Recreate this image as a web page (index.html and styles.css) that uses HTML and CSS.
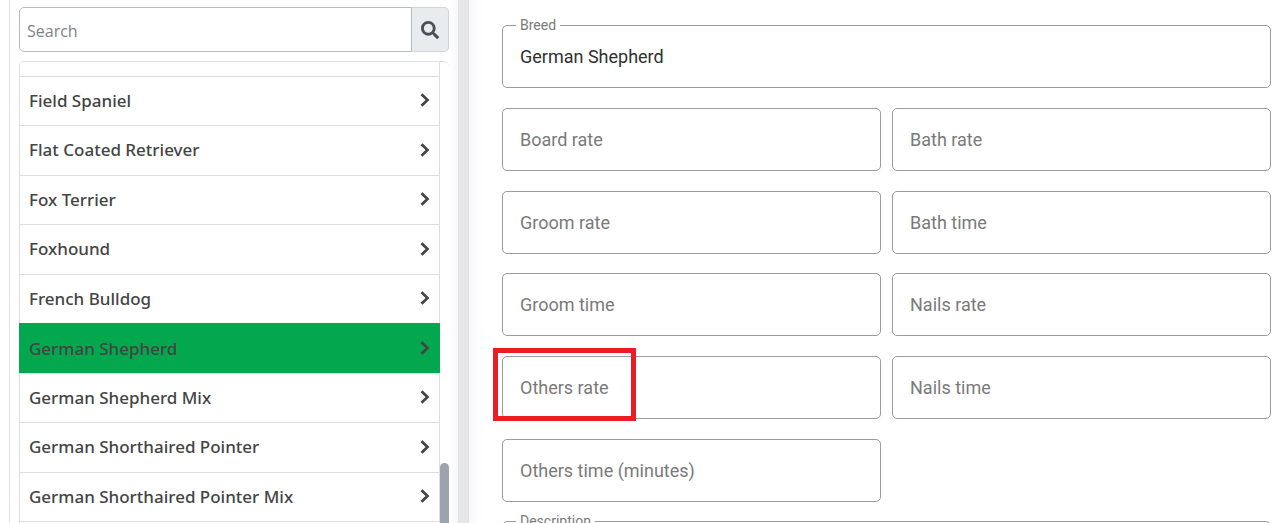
FILE: index.html
```html
<!DOCTYPE html>
<html lang="en">
<head>
<meta charset="utf-8">
<title>Breeds</title>
<link rel="stylesheet" href="styles.css">
</head>
<body>
<svg class="sprite" aria-hidden="true">
  <symbol id="chevron" viewBox="0 0 10 16"><path d="M1.500 2.200L7.500 8L1.500 13.800" fill="none" stroke="currentColor" stroke-width="2.700"/></symbol>
</svg>
<div class="page">
  <aside class="panel sidebar">
    <form class="search" role="search">
      <input class="search-input" type="text" placeholder="Search" aria-label="Search">
      <button class="search-button" type="button" aria-label="Search">
        <svg viewBox="0 0 512 512" width="18" height="18" aria-hidden="true"><path fill="currentColor" d="M505 442.700L405.300 343c-4.500-4.500-10.600-7-17-7H372c27.600-35.300 44-79.700 44-128C416 93.100 322.900 0 208 0S0 93.100 0 208s93.100 208 208 208c48.300 0 92.700-16.400 128-44v16.300c0 6.400 2.500 12.500 7 17l99.700 99.700c9.400 9.400 24.600 9.400 33.900 0l28.300-28.300c9.400-9.400 9.400-24.600.1-34zM208 336c-70.700 0-128-57.200-128-128 0-70.700 57.200-128 128-128 70.700 0 128 57.200 128 128 0 70.700-57.200 128-128 128z"/></svg>
      </button>
    </form>
    <div class="list-box">
      <ul class="list">
        <li class="item"></li>
        <li class="item"><button class="row" type="button">Field Spaniel<svg class="chevron"><use href="#chevron"/></svg></button></li>
        <li class="item"><button class="row" type="button">Flat Coated Retriever<svg class="chevron"><use href="#chevron"/></svg></button></li>
        <li class="item"><button class="row" type="button">Fox Terrier<svg class="chevron"><use href="#chevron"/></svg></button></li>
        <li class="item"><button class="row" type="button">Foxhound<svg class="chevron"><use href="#chevron"/></svg></button></li>
        <li class="item"><button class="row" type="button">French Bulldog<svg class="chevron"><use href="#chevron"/></svg></button></li>
        <li class="item active"><button class="row" type="button" aria-current="true">German Shepherd<svg class="chevron"><use href="#chevron"/></svg></button></li>
        <li class="item"><button class="row" type="button">German Shepherd Mix<svg class="chevron"><use href="#chevron"/></svg></button></li>
        <li class="item"><button class="row" type="button">German Shorthaired Pointer<svg class="chevron"><use href="#chevron"/></svg></button></li>
        <li class="item"><button class="row" type="button">German Shorthaired Pointer Mix<svg class="chevron"><use href="#chevron"/></svg></button></li>
        <li class="item"></li>
      </ul>
      <div class="thumb"></div>
    </div>
  </aside>
  <main class="panel detail">
    <form class="form">
      <div class="field wide floated"><input id="breed" type="text" value="German Shepherd"><label for="breed">Breed</label></div>
      <div class="field"><input id="board-rate" type="text"><label for="board-rate">Board rate</label></div>
      <div class="field"><input id="bath-rate" type="text"><label for="bath-rate">Bath rate</label></div>
      <div class="field"><input id="groom-rate" type="text"><label for="groom-rate">Groom rate</label></div>
      <div class="field"><input id="bath-time" type="text"><label for="bath-time">Bath time</label></div>
      <div class="field"><input id="groom-time" type="text"><label for="groom-time">Groom time</label></div>
      <div class="field"><input id="nails-rate" type="text"><label for="nails-rate">Nails rate</label></div>
      <div class="field marked"><input id="others-rate" type="text"><label for="others-rate">Others rate</label></div>
      <div class="field"><input id="nails-time" type="text"><label for="nails-time">Nails time</label></div>
      <div class="field"><input id="others-time" type="text"><label for="others-time">Others time (minutes)</label></div>
      <div class="field wide floated"><textarea id="description"></textarea><label for="description">Description</label></div>
    </form>
  </main>
</div>
</body>
</html>
```

FILE: styles.css
```css
*, *::after { box-sizing: border-box; }

body {
  margin: 0;
  background: #fff;
  font-family: "Open Sans", "Noto Sans", sans-serif;
  color: #444;
}

.sprite { position: absolute; width: 0; height: 0; }

.page {
  display: grid;
  grid-template-columns: 450px 1fr;
  column-gap: 9px;
  height: 100vh;
  padding-left: 9px;
  overflow: hidden;
  background: linear-gradient(90deg, #fff 9px, #e7e7e7 9px);
}

.panel { min-width: 0; min-height: 0; background: #fff; }

.sidebar {
  display: flex;
  flex-direction: column;
  gap: 9px;
  padding: 7px 9px 0;
  border: solid #dee2e6;
  border-width: 0 1px;
  background: linear-gradient(270deg, #f8f8fa, #fff 10px);
}

.search { display: flex; flex: none; height: 45px; }

.search-input {
  flex: 1;
  min-width: 0;
  padding: 2px 7px 0;
  border: 1px solid #b9bbbd;
  border-radius: 5px 0 0 5px;
  font: 16px "Open Sans", "Noto Sans", sans-serif;
  background: #fff;
}

.search-input::placeholder { color: #7b838a; opacity: 1; }

.search-button {
  display: grid;
  place-items: center;
  width: 37px;
  padding: 0;
  border: 1px solid #ced4da;
  border-left: 0;
  border-radius: 0 5px 5px 0;
  background: #e9ecef;
  color: #495057;
}

.list-box {
  position: relative;
  flex: 1;
  min-height: 0;
  padding-right: 9px;
  overflow: hidden;
  border-top: 1px solid #dedede;
  border-radius: 5px 5px 0 0;
}

.list {
  display: grid;
  grid-template-rows: 15px;
  grid-auto-rows: 49px 50px;
  margin: 0;
  padding: 0;
  border: solid #dedede;
  border-width: 0 1px;
  list-style: none;
}

.item { display: grid; border-bottom: 1px solid #dedede; }

.row {
  display: flex;
  align-items: center;
  justify-content: space-between;
  padding: 0 9px 2px;
  border: 0;
  background: none;
  color: #444;
  font: 500 17px "Noto Sans", "Open Sans", sans-serif;
  text-align: left;
}

.active .row { margin: -1px -1px 0; padding: 0 10px; background: #03a84e; }

.chevron { width: 10px; height: 16px; }

.thumb {
  position: absolute;
  top: 401px;
  right: 0;
  bottom: -10px;
  width: 9px;
  border-radius: 5px;
  background: #9ca3af;
}

.detail {
  padding: 25px 14px 0 33px;
  border-left: 1px solid #dee2e6;
  background: linear-gradient(90deg, #f8f8fa, #fff 14px);
}

.form {
  display: grid;
  grid-template-columns: 1fr 1fr;
  grid-auto-rows: 83px 83px 82px;
  column-gap: 11px;
}

.field { position: relative; height: 63px; }

.wide { grid-column: 1 / -1; }

.field input,
.field textarea {
  display: block;
  width: 100%;
  height: 100%;
  padding: 0 17px;
  border: 1px solid #9c9c9c;
  border-radius: 5px;
  background: #fff;
  color: #303030;
  font: 18px Roboto, sans-serif;
  resize: none;
}

.field label {
  position: absolute;
  top: 0;
  left: 18px;
  color: #7a7a7a;
  font: 18px/63px Roboto, sans-serif;
}

.field.floated label {
  top: -9px;
  left: 14px;
  padding: 0 4px;
  background: #fff;
  font-size: 14px;
  line-height: 18px;
}

.marked::after {
  content: "";
  position: absolute;
  top: -8px;
  left: -9px;
  width: 143px;
  height: 73px;
  border: 5px solid #ed1c24;
  pointer-events: none;
}
```
